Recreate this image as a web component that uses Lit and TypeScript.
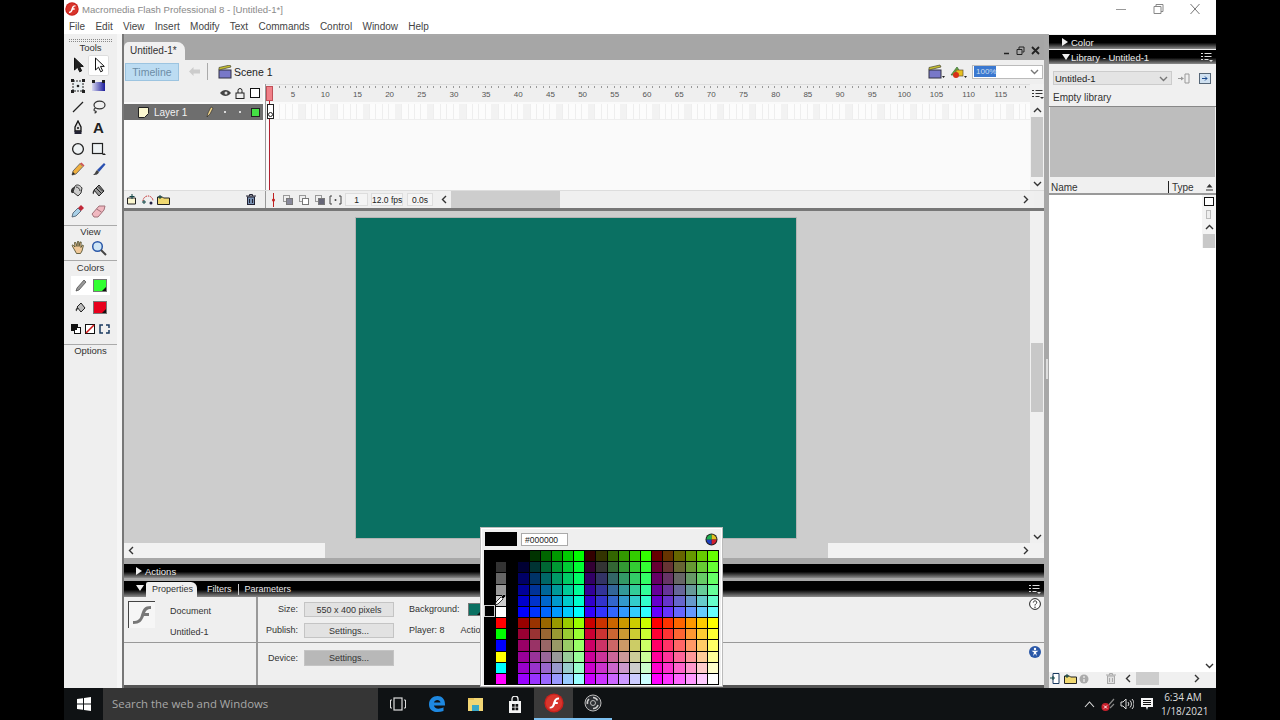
import { LitElement, html, css, svg } from 'lit';
import { customElement } from 'lit/decorators.js';

const ic = (w: number, h: number, body: unknown) =>
  html`<svg width=${w} height=${h} viewBox="0 0 ${w} ${h}">${body}</svg>`;

// flash logo, also used in the taskbar
const flashLogo = (s: number) => html`<svg width=${s} height=${s} viewBox="0 0 20 20">
  <circle cx="10" cy="10" r="9.6" fill="#c8201c" />
  <circle cx="10" cy="10" r="8.2" fill="#d8352c" />
  <path d="M15 4.6c-3.4 0-4.6 1.600-5.500 4.200l-1 3c-.5 1.400-1 2-2.800 2v1.800c3.200 0 4.400-1.400 5.200-3.800l.3-.9h2.600v-1.800h-2l.4-1.200c.4-1 1-1.500 2.800-1.500z" fill="#fff" />
</svg>`;

const arrow = (fill: string) =>
  ic(14, 16, svg`<path d="M3.500 1v12l3-2.800 2.200 4.600 2-1-2.200-4.400h3.800z" fill=${fill} stroke="#111" stroke-width="1" />`);

const chev = (rot: number, c = '#333') => html`<svg width="9" height="7" viewBox="0 0 9 7" style="transform:rotate(${rot}deg)">
  <path d="M1 5l3.500-3.500L8 5" fill="none" stroke=${c} stroke-width="1.400" />
</svg>`;
const optionsIcon = (c: string) => ic(12, 10, svg`
  <path d="M0 1.500h2M0 4.500h2M0 7.500h2M3.500 1.500h7M3.500 4.500h7M3.500 7.500h4" stroke=${c} fill="none" />
  <path d="M8 8h4l-2 2z" fill=${c} />`);

const tools = [
  arrow('#222'),
  arrow('#fff'),
  ic(14, 14, svg`<rect x="2" y="2" width="10" height="10" fill="#e8eef0" stroke="#222" stroke-dasharray="2 1" /><path d="M0 0h3v3H0zM11 0h3v3h-3zM0 11h3v3H0zM11 11h3v3h-3z" fill="#222" /><circle cx="7" cy="7" r="1.300" fill="#222" />`),
  ic(15, 14, svg`<defs><linearGradient id="gt" x1="0" x2="1"><stop offset="0" stop-color="#d8d8f0" /><stop offset="1" stop-color="#1a1a9a" /></linearGradient></defs><rect x="1" y="3" width="13" height="9" fill="url(#gt)" /><path d="M1 1h3v3H1zM11 1h3v3h-3z" fill="#222" />`),
  ic(14, 14, svg`<path d="M2 12L12 2" stroke="#222" stroke-width="1.300" />`),
  ic(15, 14, svg`<ellipse cx="8.500" cy="5" rx="5.500" ry="3.800" fill="none" stroke="#333" stroke-width="1.200" /><path d="M4.500 8c-2 1-2 3 0 3 1 0 1 2-1 2" fill="none" stroke="#333" stroke-width="1.200" />`),
  ic(12, 15, svg`<path d="M6 1l3 6v4H3V7z" fill="#ddd" stroke="#111" stroke-width="1.300" /><path d="M2.500 11h7v3h-7z" fill="#223" /><circle cx="6" cy="8" r="1" fill="#111" />`),
  html`<b class="tool-a">A</b>`,
  ic(14, 14, svg`<circle cx="7" cy="7" r="5.400" fill="#eef2f4" stroke="#222" stroke-width="1.300" />`),
  ic(15, 14, svg`<rect x="1.500" y="1.500" width="10" height="10" fill="#eef2f4" stroke="#222" stroke-width="1.200" /><path d="M11 13h4l-2-2z" fill="#222" />`),
  ic(14, 14, svg`<path d="M1 13l1-4 7-7.500 3 3L5 12z" fill="#f0b040" stroke="#555" stroke-width=".8" /><path d="M9 1.500l1.500-1 3 3-1 1z" fill="#d05050" /><path d="M1 13l1-3 2 2z" fill="#222" />`),
  ic(14, 14, svg`<path d="M5 8l7-7 1.500 1.500L7 10z" fill="#2a50b0" /><path d="M5 8l2 2c-1 3-4 3-6 3 2-1 2-3 4-5z" fill="#444" />`),
  ic(15, 15, svg`<path d="M5 3c2-2 5-1 7 2l-1 5-3 3-5-4z" fill="#ccc" stroke="#333" /><path d="M6 4c2 0 4 2 4 4" fill="none" stroke="#333" /><path d="M4 4C1 5 0 9 2 10s1-3 2-4z" fill="#333" />`),
  ic(15, 15, svg`<path d="M3 7l5-5 5 6-5 5z" fill="#999" stroke="#222" /><path d="M5 5l5 5M7 3.500l5 5" stroke="#222" /><path d="M4 6c-2 1-3 4-2 5s1-3 2-3z" fill="#333" />`),
  ic(14, 14, svg`<path d="M1 13l1-4 5-5 3 3-5 5z" fill="#a8d0e8" stroke="#456" stroke-width=".8" /><path d="M7 4l3 3 1.500-1.500L13 4l-3-3-1.500 1.500z" fill="#c02838" />`),
  ic(15, 14, svg`<path d="M1 10l7-8h6l-1 4-6 7H3z" fill="#f0b8c0" stroke="#a07078" /><path d="M5.500 5l5 3" stroke="#a07078" />`),
];

const handIcon = ic(16, 16, svg`<path d="M4 9L2 5.500l1-.7L5 7 4.500 2.500h1.200L7 6.500 7.500 1.500h1.200l.3 5 1-4.500h1.200l-.3 5.500 1.500-2.500 1 .5-1.400 5.500-1.500 2.500H6.500z" fill="#f0c898" stroke="#442" stroke-width=".8" />`);
const zoomIcon = ic(16, 16, svg`<circle cx="6.500" cy="6.500" r="4.800" fill="#cfe6f6" stroke="#2a58a8" stroke-width="1.500" /><path d="M10 10l5 5" stroke="#444" stroke-width="2" />`);

const BASE = [0, 0x33, 0x66, 0x99, 0xcc, 0xff];
const SIDE = ['#000', '#333', '#666', '#999', '#ccc', '#fff', '#f00', '#0f0', '#00f', '#ff0', '#0ff', '#f0f'];

function swatches(): string[] {
  const out: string[] = [];
  for (let row = 0; row < 12; row++) {
    out.push('#000', SIDE[row], '#000');
    const b = BASE[row % 6];
    for (let col = 0; col < 18; col++) {
      const r = BASE[Math.floor(col / 6) + (row < 6 ? 0 : 3)];
      const g = BASE[col % 6];
      out.push(`rgb(${r},${g},${b})`);
    }
  }
  return out;
}

const rulerLabels = Array.from({ length: 23 }, (_, i) => (i + 1) * 5);

@customElement('app-root')
export class AppRoot extends LitElement {
  static styles = css`
    :host {
      display: flex;
      justify-content: center;
      width: 1280px;
      height: 720px;
      background: #000;
      font-family: 'Liberation Sans', sans-serif;
      font-size: 10px;
      color: #222;
      overflow: hidden;
    }
    svg { display: block; flex: none; }
    .screen {
      position: relative;
      width: 1152px;
      height: 720px;
      display: flex;
      flex-direction: column;
      background: #fff;
    }
    .titlebar {
      height: 18px;
      display: flex;
      align-items: center;
      padding-left: 1px;
      font-size: 9.600px;
      color: #8a8a8a;
      gap: 3px;
    }
    .win-btns { margin-left: auto; display: flex; gap: 23px; padding-right: 14px; }
    .menubar {
      height: 16px;
      display: flex;
      align-items: center;
      padding-left: 5px;
      gap: 10.300px;
      font-size: 10px;
      color: #444;
    }
    .work { height: 654px; display: flex; background: #f6f6f6; }

    .tools {
      width: 53px;
      margin-right: 5px;
      background: #efefef;
      padding-top: 5px;
      display: flex;
      flex-direction: column;
      align-items: stretch;
      text-align: center;
      color: #333;
      font-size: 9.500px;
    }
    .grip { height: 3px; margin: 0 5px; border-top: 1px dotted #888; border-bottom: 1px dotted #888; box-sizing: border-box; flex: none; }
    .tools-label { height: 12px; line-height: 12px; flex: none; }
    .tools-label.first { height: 13px; }
    .tool-grid { display: grid; grid-template-columns: 21px 21px; grid-auto-rows: 20.800px; padding-left: 3px; }
    .tool { display: flex; align-items: center; justify-content: center; }
    .tool.on { background: #fff; border-radius: 2px; box-shadow: inset 0 0 0 1px #ddd; }
    .tool-a { font: bold 15px 'Liberation Sans', sans-serif; color: #222; }
    .sep { height: 1px; background: #aaa; flex: none; }
    .color-row { height: 19px; display: flex; align-items: center; justify-content: center; gap: 6px; margin: 0 7px 0 7px; flex: none; }
    .color-row.on { background: #fff; }
    .swatch { position: relative; width: 14px; height: 13px; border: 1px solid #777; box-sizing: border-box; }
    .swatch::after { content: ''; position: absolute; right: 0; bottom: 0; border: 2.500px solid transparent; border-right-color: #111; border-bottom-color: #111; }
    .tool-row3 { display: flex; justify-content: center; gap: 4px; height: 18px; align-items: center; flex: none; }

    .center { width: 922px; display: flex; flex-direction: column; background: #a8a8a8; border-left: 2px solid #777; box-sizing: border-box; padding-top: 2px; }
    .tabstrip { height: 24px; flex: none; display: flex; align-items: flex-end; background: #a6a6a6; border-top-left-radius: 6px; }
    .doc-tab { height: 18px; line-height: 18px; width: 55px; padding-left: 6px; background: #f0f0f0; border-radius: 5px 8px 0 0; font-size: 10px; color: #333; }
    .doc-btns { margin-left: auto; margin-right: 4px; margin-bottom: 5px; display: flex; gap: 6px; align-items: center; }
    .toolbar { height: 24px; flex: none; background: #efefef; display: flex; align-items: center; padding-left: 1px; padding-bottom: 1px; box-sizing: border-box; }
    .tl-btn { width: 52px; height: 16px; line-height: 16px; text-align: center; background: #bcdcf2; border: 1px solid #9cc4e0; color: #6c8ca6; font-size: 10.500px; }
    .back { margin: 0 7px 0 10px; }
    .tb-sep { width: 1px; height: 17px; background: #aaa; margin-right: 10px; }
    .scene { margin-left: 2px; font-size: 10.500px; color: #222; }
    .tb-right { margin-left: auto; display: flex; align-items: center; gap: 5px; padding-right: 1px; }
    .zoom-box { width: 71px; height: 14px; background: #fff; border: 1px solid #bbb; display: flex; align-items: center; padding: 0 3px 0 1px; justify-content: space-between; box-sizing: border-box; margin-left: -1px; }
    .zoom-box span { background: #3a78d0; color: #cde; font-size: 8px; line-height: 11px; padding: 0 2px; width: 18px; }

    .timeline { height: 124px; flex: none; display: flex; flex-direction: column; background: #fafafa; }
    .tl-top { height: 106px; flex: none; display: flex; }
    .layers { width: 139px; flex: none; margin-right: 2px; }
    .layer-head { height: 18px; background: #efefef; display: flex; align-items: center; padding-left: 3px; }
    .layer-head .icons { margin-left: auto; margin-right: 3px; display: flex; gap: 3px; align-items: center; }
    .layer-head .icons svg:last-child { margin-left: 2px; }
    .layer-row { height: 16px; margin-top: 2px; background: #6e6e6e; display: flex; align-items: center; color: #f2f2f2; padding-left: 14px; font-size: 10px; }
    .layer-row .name { margin-left: 5px; }
    .layer-row .marks { margin-left: auto; display: flex; align-items: center; gap: 10px; padding-right: 3.500px; }
    .dot { width: 2px; height: 2px; background: #fff; border-radius: 50%; }
    .dot + .dot { margin-left: 3px; }
    .frames { position: relative; flex: 1; border-left: 1px solid #999; overflow: hidden; }
    .ruler { height: 18px; background: #efefef; display: flex; padding-left: 11px; font-size: 8px; line-height: 19px; color: #555; box-sizing: border-box; border-top: 1px solid #ddd;
      background-image: repeating-linear-gradient(90deg, #999 0 1px, transparent 1px 6.436px); background-size: 100% 2px; background-repeat: no-repeat; background-position: 0 1px; }
    .ruler span { width: 32.180px; flex: none; text-align: center; }
    .frame-row { height: 16px; margin-top: 2px; background-color: #fcfcfc; background-image: repeating-linear-gradient(90deg, #f2f2f2 0 6.436px, transparent 6.436px 32.180px), repeating-linear-gradient(90deg, #eee 0 1px, transparent 1px 6.436px); border-bottom: 1px solid #eee; box-sizing: border-box; }
    .playhead { position: absolute; left: 0; top: 2px; bottom: 0; width: 7px; display: flex; flex-direction: column; align-items: center; }
    .playhead .head { width: 7px; height: 15px; background: #f08088; border: 1px solid #c05058; box-sizing: border-box; flex: none; }
    .playhead .line { width: 1px; flex: 1; background: #b02030; }
    .key { position: absolute; left: 1px; top: 20px; width: 7px; height: 15px; border: 1px solid #222; background: #fff; box-sizing: border-box; }
    .key::after { content: ''; position: absolute; left: 0; bottom: 1px; width: 3px; height: 3px; border: 1px solid #222; border-radius: 50%; }
    .vscroll { width: 14px; flex: none; display: flex; flex-direction: column; align-items: center; background: #f2f2f2; }
    .vscroll .thumb { width: 12px; background: #c8c8c8; }
    .vscroll .fill { flex: 1; }
    .vscroll .arr { height: 13px; display: flex; align-items: center; flex: none; }

    .tl-bottom { height: 18px; display: flex; align-items: center; background: #efefef; border-top: 1px solid #ddd; box-sizing: border-box; }
    .tl-left { width: 139px; flex: none; display: flex; align-items: center; padding: 0 7px 0 3px; box-sizing: border-box; gap: 3px; margin-right: 2px; }
    .tl-left .trash { margin-left: auto; }
    .tl-mid { display: flex; align-items: center; flex: 1; border-left: 1px solid #999; height: 100%; padding-left: 5px; }
    .onion { display: flex; gap: 3px; margin-left: 5px; }
    .cell { height: 13px; line-height: 12px; text-align: center; font-size: 8.500px; background: #f4f4f4; border: 1px solid #ddd; box-sizing: border-box; white-space: nowrap; flex: none; }
    .hbar { flex: 1; height: 100%; display: flex; align-items: center; background: #f0f0f0; padding: 0 4px 0 0; }
    .hbar .thumb { height: 100%; background: #cdcdcd; }
    .hbar .end { margin-left: auto; }

    .tl-gap { height: 3px; flex: none; background: #777; }
    .stage-area { height: 347px; flex: none; display: flex; flex-direction: column; }
    .stage-main { flex: 1; display: flex; min-height: 0; }
    .canvas { flex: 1; background: #cdcdcd; padding: 7px 0 0 232px; box-sizing: border-box; }
    .stage { width: 440px; height: 320px; background: #0a7062; box-shadow: 0 0 0 1px rgba(0,0,0,.12); }
    .stage-h { height: 15px; flex: none; display: flex; align-items: center; background: #f2f2f2; padding: 0 14px 0 3px; }
    .stage-h .thumb { height: 100%; background: #cdcdcd; width: 503px; margin-left: 189px; }
    .stage-h .end { margin-left: auto; }

    .panel-gap { height: 6px; flex: none; }
    .bar { height: 14px; flex: none; background: linear-gradient(#000 0 55%, #8c8c8c); color: #eee; display: flex; align-items: center; font-size: 9.500px; padding-left: 12px; gap: 3px; }
    .tri-r { width: 0; height: 0; border: 4px solid transparent; border-left: 6px solid #eee; border-right: 0; }
    .tri-d { width: 0; height: 0; border: 4px solid transparent; border-top: 6px solid #eee; border-bottom: 0; }
    .props-tabs { height: 16px; margin-top: 3px; background: linear-gradient(#000 0 55%, #8c8c8c); padding-left: 12px; align-items: flex-end; gap: 0; }
    .props-tabs .tri-d { margin-bottom: 6px; margin-right: 2px; }
    .ptab { height: 15px; line-height: 15px; padding: 0 4px 0 6px; background: #efefef; color: #333; border-radius: 2px 6px 0 0; font-size: 9px; }
    .ptab2 { height: 15px; line-height: 15px; color: #eee; font-size: 9px; padding: 0 6px 0 10px; }
    .ptab2 + .ptab2 { border-left: 1px solid #ccc; padding-left: 6px; height: 11px; line-height: 11px; margin-bottom: 2px; }
    .bar .opts { margin-left: auto; margin-right: 3px; align-self: center; }

    .props { flex: 1; background: #efefef; display: grid; grid-template-columns: 134px 1fr; grid-template-rows: 46px 1fr; font-size: 9px; color: #333; border-bottom: 3px solid #555; }
    .doc-info { display: flex; border-right: 2px solid #999; border-bottom: 1px solid #999; padding: 4px 0 0 4px; gap: 15px; }
    .doc-icon { width: 27px; height: 27px; flex: none; border-left: 1px solid #444; border-top: 1px solid #444; background: #f6f6f6; box-sizing: border-box; display: flex; align-items: center; justify-content: center; }
    .doc-names { display: flex; flex-direction: column; gap: 11px; padding-top: 5px; }
    .doc-empty { border-right: 2px solid #999; }
    .prop-grid { display: grid; grid-template-columns: 40px 90px auto; grid-auto-rows: 21px; column-gap: 6px; align-items: center; border-bottom: 1px solid #999; align-content: center; }
    .prop-grid > .lbl, .dev > .lbl { text-align: right; }
    .pbtn { height: 15px; line-height: 14px; text-align: center; background: #e2e2e2; border: 1px solid #c4c4c4; box-sizing: border-box; }
    .pbtn.dark { background: #b8b8b8; height: 16px; }
    .prop-extra { display: flex; align-items: center; gap: 4px; padding-left: 9px; }
    .prop-extra .swatch { background: #0a7062; margin-left: 4px; }
    .prop-extra .action { margin-left: 12px; }
    .dev { display: grid; grid-template-columns: 40px 90px; column-gap: 6px; align-items: center; padding-top: 7px; }
    .round-icon { position: absolute; left: 965px; }

    .splitter { width: 5px; flex: none; background: #a8a8a8; display: flex; align-items: center; }
    .splitter i { display: block; width: 2px; height: 20px; background: #ddd; margin-left: 2px; margin-top: 16px; }
    .side { flex: 1; display: flex; flex-direction: column; background: #f0f0f0; padding: 1px 0 3px; }
    .side .bar { padding-left: 13px; gap: 3px; }
    .side .bar + .bar { margin-top: 1px; }
    .side .tri-d { margin-right: -2px; }
    .lib-tools { height: 24px; flex: none; display: flex; align-items: center; padding: 4px 4px 0; box-sizing: border-box; gap: 6px; }
    .lib-tools svg:last-child { margin-left: 3px; }
    .lib-select { width: 119px; height: 14px; background: #e4e4e4; border: 1px solid #ccc; display: flex; align-items: center; justify-content: space-between; padding: 0 3px 0 1px; font-size: 9.500px; box-sizing: border-box; }
    .empty-lab { height: 19px; line-height: 19px; padding-left: 4px; font-size: 10px; border-bottom: 1px solid #888; box-sizing: border-box; flex: none; color: #333; }
    .preview { height: 70px; flex: none; background: #bdbdbd; margin: 0 1px; }
    .lib-head { margin-top: 4px; height: 14px; flex: none; display: flex; background: #f0f0f0; border-bottom: 2px solid #999; box-sizing: border-box; font-size: 10px; line-height: 13px; color: #333; }
    .lib-head .name { width: 120px; padding-left: 2px; box-sizing: border-box; border-right: 1px solid #222; }
    .lib-head .type { flex: 1; padding-left: 3px; }
    .lib-head .sort { width: 13px; display: flex; align-items: center; justify-content: center; }
    .lib-list { flex: 1; background: #fff; display: flex; justify-content: flex-end; min-height: 0; }
    .lib-scroll { width: 14px; display: flex; flex-direction: column; align-items: center; background: #f4f4f4; }
    .lib-scroll .mini { height: 13px; display: flex; align-items: center; justify-content: center; flex: none; }
    .lib-scroll .thumb { width: 12px; height: 14px; background: #c8c8c8; flex: none; }
    .lib-scroll .fill { flex: 1; background: #fff; width: 100%; }
    .lib-foot { height: 13px; flex: none; display: flex; align-items: center; background: #f0f0f0; padding: 0 15px 0 1px; gap: 2px; }
    .lib-foot .left { margin-left: 6px; }
    .lib-foot .thumb { height: 100%; width: 23px; background: #cdcdcd; margin-left: 1px; }
    .lib-foot .end { margin-left: auto; }

    .taskbar { height: 32px; flex: none; background: #0f1214; display: flex; align-items: center; color: #ddd; }
    .start { width: 39px; display: flex; justify-content: center; flex: none; }
    .search { width: 275px; height: 100%; background: #353535; color: #a8a8a8; font-size: 11.400px; line-height: 32px; padding-left: 9px; box-sizing: border-box; font-family: 'Open Sans', 'Noto Sans', sans-serif; }
    .task-apps { display: flex; height: 100%; }
    .app { width: 39px; height: 100%; display: flex; align-items: center; justify-content: center; box-sizing: border-box; }
    .app.active { background: #3a3a3a; border-bottom: 2px solid #7cc0f0; }
    .app.running { border-bottom: 2px solid #7cc0f0; }
    .tray { margin-left: auto; display: flex; align-items: center; gap: 5.500px; height: 100%; padding-right: 11px; }
    .clock { font-size: 10px; text-align: center; line-height: 14px; width: 44px; font-family: 'Open Sans', 'Noto Sans', sans-serif; margin-left: 2px; }

    .popup { position: absolute; left: 417px; top: 528px; width: 241px; height: 158px; background: #efefef; border: 1px solid #fff; box-sizing: border-box; box-shadow: 0 0 0 1px #bbb; padding: 2px 2px 0; display: flex; flex-direction: column; }
    .pop-head { height: 16px; display: flex; align-items: center; flex: none; padding-left: 1px; }
    .pop-color { width: 32px; height: 14px; background: #000; margin-right: 4px; }
    .pop-hex { height: 13px; background: #fff; border: 1px solid #aaa; font-size: 8.500px; line-height: 12px; padding-left: 3px; box-sizing: border-box; width: 47px; }
    .pop-wheel { margin-left: auto; margin-right: 1px; }
    .pal { position: relative; flex: 1; display: grid; grid-template-columns: repeat(21, 1fr); grid-template-rows: repeat(12, 1fr); gap: 1px; background: #000; padding: 1px; margin-top: 3px; }
    .pal .sel { position: absolute; left: 0; top: 55px; width: 11px; height: 12px; border: 1px solid #ccc; box-sizing: border-box; background: #000; }
    .dropper { position: absolute; left: 10px; top: 43px; }
  `;

  render() {
    return html`
      <div class="screen">
        <div class="titlebar">
          <span>${flashLogo(14)}</span>
          <span>Macromedia Flash Professional 8 - [Untitled-1*]</span>
          <div class="win-btns">
            ${ic(14, 10, svg`<path d="M2 5.500h10" stroke="#999" />`)}
            ${ic(14, 10, svg`<path d="M3 2.500h7v7H3zM5 2.500V.500h7v7h-2" fill="none" stroke="#888" />`)}
            ${ic(14, 10, svg`<path d="M2.500 0l9 10M11.500 0l-9 10" stroke="#777" fill="none" />`)}
          </div>
        </div>
        <div class="menubar">
          ${['File', 'Edit', 'View', 'Insert', 'Modify', 'Text', 'Commands', 'Control', 'Window', 'Help'].map((m) => html`<span>${m}</span>`)}
        </div>
        <div class="work">
          ${this.renderTools()}
          <div class="center">
            ${this.renderDocHead()}
            ${this.renderTimeline()}
            <div class="tl-gap"></div>
            <div class="stage-area">
              <div class="stage-main">
                <div class="canvas"><div class="stage"></div></div>
                <div class="vscroll" style="background:#f0f0f0">
                  <div class="fill" style="flex:0 0 132px"></div>
                  <div class="thumb" style="height:69px"></div>
                  <div class="fill"></div>
                  <div class="arr">${chev(180)}</div>
                </div>
              </div>
              <div class="stage-h">
                ${chev(-90)}<div class="thumb"></div><span class="end">${chev(90)}</span>
              </div>
            </div>
            <div class="panel-gap"></div>
            <div class="bar"><i class="tri-r"></i><span>Actions</span></div>
            <div class="bar props-tabs">
              <i class="tri-d"></i>
              <span class="ptab">Properties</span>
              <span class="ptab2">Filters</span>
              <span class="ptab2">Parameters</span>
              <span class="opts">${optionsIcon('#ddd')}</span>
            </div>
            ${this.renderProps()}
          </div>
          <div class="splitter"><i></i></div>
          ${this.renderLibrary()}
        </div>
        ${this.renderTaskbar()}
        ${this.renderPopup()}
      </div>
    `;
  }

  renderTools() {
    return html`<div class="tools">
      <div class="grip"></div>
      <div class="tools-label first">Tools</div>
      <div class="tool-grid">
        ${tools.map((t, i) => html`<div class="tool ${i === 1 ? 'on' : ''}">${t}</div>`)}
      </div>
      <div class="sep" style="margin-top:3.600px"></div>
      <div class="tools-label">View</div>
      <div class="tool-grid" style="grid-auto-rows:20px">
        <div class="tool">${handIcon}</div><div class="tool">${zoomIcon}</div>
      </div>
      <div class="sep" style="margin-top:2px"></div>
      <div class="tools-label" style="margin-top:1px">Colors</div>
      <div class="color-row on" style="margin-top:2px">
        ${ic(12, 13, svg`<path d="M1 12l1-3 7-8 2 2-7 8z" fill="#999" stroke="#444" stroke-width=".7" />`)}
        <div class="swatch" style="background:#33ff33"></div>
      </div>
      <div class="color-row" style="margin-top:3.500px">
        ${ic(12, 13, svg`<path d="M2 6l4-4 4 5-4 4z" fill="#bbb" stroke="#222" /><path d="M3 6c-2 1-3 3-2 4s1-2 2-2z" fill="#333" />`)}
        <div class="swatch" style="background:#e8001c"></div>
      </div>
      <div class="tool-row3" style="margin-top:2.500px">
        ${ic(10, 10, svg`<rect x=".5" y=".5" width="6" height="6" fill="#111" stroke="#111" /><rect x="3.500" y="3.500" width="6" height="6" fill="#fff" stroke="#111" /><rect x="1" y="1" width="5" height="5" fill="#111" />`)}
        ${ic(10, 10, svg`<rect x=".5" y=".5" width="9" height="9" fill="#fff" stroke="#111" /><path d="M1 9l8-8" stroke="#d01818" stroke-width="1.600" />`)}
        ${ic(11, 10, svg`<path d="M4 1H1v8h3M7 1h3v3M7 9h3V6" fill="none" stroke="#1a3a60" stroke-width="1.500" />`)}
      </div>
      <div class="sep" style="margin-top:6.500px"></div>
      <div class="tools-label">Options</div>
    </div>`;
  }

  renderDocHead() {
    return html`
      <div class="tabstrip">
        <div class="doc-tab">Untitled-1*</div>
        <div class="doc-btns">
          ${ic(7, 8, svg`<path d="M1 6.500h5" stroke="#222" stroke-width="1.500" />`)}
          ${ic(9, 9, svg`<path d="M1 3.500h5v5H1zM3 3V1h5v5H6.500" fill="none" stroke="#222" />`)}
          ${ic(9, 9, svg`<path d="M1 1l7 7M8 1L1 8" stroke="#222" stroke-width="1.800" />`)}
        </div>
      </div>
      <div class="toolbar">
        <div class="tl-btn">Timeline</div>
        <span class="back">${ic(11, 9, svg`<path d="M0 4.500L4.500 0v2.500H11v4H4.500V9z" fill="#ccc" />`)}</span>
        <div class="tb-sep"></div>
        ${ic(14, 14, svg`<rect x="1" y="5" width="12" height="8" fill="#7878c8" stroke="#334" /><path d="M1 5L1 2.500 12 0l1 2z" fill="#c8c030" stroke="#443" stroke-width=".7" />`)}
        <span class="scene">Scene 1</span>
        <div class="tb-right">
          ${ic(17, 15, svg`<rect x="1" y="6" width="12" height="8" fill="#7878c8" stroke="#334" /><path d="M1 6V3.500L12 1l1 2z" fill="#c8c030" stroke="#443" stroke-width=".7" /><path d="M14 12h3l-1.500 2z" fill="#222" />`)}
          ${ic(18, 15, svg`<path d="M1 11l6-8 2 3v5z" fill="#6ab040" stroke="#363" stroke-width=".7" /><rect x="6" y="6" width="7" height="6" fill="#e8c020" stroke="#653" stroke-width=".7" /><circle cx="6" cy="11" r="3" fill="#d83018" /><path d="M14 12h3l-1.500 2z" fill="#222" />`)}
          <div class="zoom-box"><span>100%</span>${chev(180, '#777')}</div>
        </div>
      </div>`;
  }

  renderTimeline() {
    return html`<div class="timeline">
      <div class="tl-top">
        <div class="layers">
          <div class="layer-head">
            <div class="icons">
              ${ic(12, 9, svg`<path d="M0 4c3-4 8-4 11 0-3 4-8 4-11 0z" fill="#444" /><circle cx="6" cy="4" r="1.500" fill="#ddd" />`)}
              ${ic(10, 11, svg`<rect x="1" y="5" width="8" height="5.500" fill="#eee" stroke="#222" /><path d="M3 5V2.500a2 2 0 0 1 4 0V5" fill="none" stroke="#222" />`)}
              ${ic(10, 10, svg`<rect x=".5" y=".5" width="9" height="9" fill="#fff" stroke="#111" />`)}
            </div>
          </div>
          <div class="layer-row">
            ${ic(11, 11, svg`<path d="M.5.500h10v6l-4 4h-6z" fill="#fbf7d0" stroke="#222" />`)}
            <span class="name">Layer 1</span>
            <div class="marks">
              ${ic(8, 12, svg`<path d="M1 11l1-4 3-6 2 1-3 6z" fill="#f4d890" stroke="#222" stroke-width=".6" />`)}
              <i class="dot"></i><i class="dot"></i>
              ${ic(9, 9, svg`<rect x=".5" y=".5" width="8" height="8" fill="#44e044" stroke="#222" />`)}
            </div>
          </div>
        </div>
        <div class="frames">
          <div class="ruler">${rulerLabels.map((n) => html`<span>${n}</span>`)}</div>
          <div class="frame-row"></div>
          <div class="playhead"><div class="head"></div><div class="line"></div></div>
          <div class="key"></div>
        </div>
        <div class="vscroll">
          <div class="arr" style="height:20px;padding-left:1px">${optionsIcon('#333')}</div>
          <div class="arr">${chev(0)}</div>
          <div class="thumb" style="height:60px"></div>
          <div class="fill"></div>
          <div class="arr">${chev(180)}</div>
        </div>
      </div>
      <div class="tl-bottom">
        <div class="tl-left">
          ${ic(12, 11, svg`<path d="M.5 4h8v6h-8z" fill="#fbf7d0" stroke="#222" /><path d="M5 0v5M2.500 2.500h5" stroke="#144" />`)}
          ${ic(12, 11, svg`<path d="M1 7a5 5 0 0 1 10 0" fill="none" stroke="#c02020" stroke-dasharray="1.500 1" /><circle cx="9" cy="9" r="1.500" fill="#224" /><path d="M2 6v4M0 8h4" stroke="#144" />`)}
          ${ic(13, 11, svg`<path d="M.5 3h5l1 1h6v6.500H.5z" fill="#f0d870" stroke="#222" /><path d="M3 1v4M1 3h4" stroke="#144" />`)}
          <span class="trash">${ic(10, 11, svg`<rect x="1.500" y="3" width="7" height="7.500" fill="#7890b0" stroke="#223" /><path d="M0 2h10M3.500 2V.5h3V2M3.500 5v4M6.500 5v4" stroke="#223" fill="none" />`)}</span>
        </div>
        <div class="tl-mid">
          ${ic(5, 14, svg`<path d="M2.500 0v14" stroke="#c02020" /><circle cx="2.500" cy="7" r="1.500" fill="#c02020" />`)}
          <div class="onion">
            ${['#889', '#fff', '#667', '#fff'].map((c, i) => ic(13, 12, i < 3
              ? svg`<rect x="2.500" y="1.500" width="6" height="6" fill="none" stroke="#999" /><rect x="5.500" y="4.500" width="6" height="6" fill=${c} stroke="#777" />`
              : svg`<path d="M3 2H1v8h2M10 2h2v8h-2" fill="none" stroke="#444" /><circle cx="6.500" cy="6" r="1" fill="#444" />`))}
          </div>
          <div class="cell" style="width:23px;margin-left:3px">1</div>
          <div class="cell" style="width:32px;margin-left:3px">12.0 fps</div>
          <div class="cell" style="width:26px;margin-left:4px">0.0s</div>
          <div class="hbar" style="margin-left:7px">
            ${chev(-90)}<div class="thumb" style="width:109px;margin-left:2px"></div><span class="end">${chev(90)}</span>
          </div>
          <div style="width:10px"></div>
        </div>
      </div>
    </div>`;
  }

  renderProps() {
    return html`<div class="props">
      <div class="doc-info">
        <div class="doc-icon">${ic(22, 22, svg`<path d="M20 2c-7 0-8 3-10 9-1 4-3 6-8 6v3c7 0 9-3 11-8h5V9h-4c1-2 2-4 6-4z" fill="#777" />`)}</div>
        <div class="doc-names"><span>Document</span><span>Untitled-1</span></div>
      </div>
      <div class="prop-grid">
        <span class="lbl">Size:</span><div class="pbtn">550 x 400 pixels</div>
        <div class="prop-extra"><span>Background:</span><div class="swatch"></div></div>
        <span class="lbl">Publish:</span><div class="pbtn">Settings...</div>
        <div class="prop-extra"><span>Player: 8</span><span class="action">ActionScript</span></div>
      </div>
      <div class="doc-empty"></div>
      <div>
        <div class="dev"><span class="lbl">Device:</span><div class="pbtn dark">Settings...</div></div>
      </div>
    </div>
    <div class="round-icon" style="top:598px">
      ${ic(12, 12, svg`<circle cx="6" cy="6" r="5.400" fill="#fff" stroke="#222" /><path d="M4.300 4.500c.3-2.300 3.600-2 3.400 0 0 1.500-1.700 1.300-1.700 3" fill="none" stroke="#222" /><circle cx="6" cy="9.300" r=".7" fill="#222" />`)}
    </div>
    <div class="round-icon" style="top:646px">
      ${ic(12, 12, svg`<circle cx="6" cy="6" r="6" fill="#2a58a8" /><circle cx="6" cy="3" r="1.200" fill="#fff" /><path d="M2.500 4.800h7L7 6.500 8 10 6 7.800 4 10l1-3.500z" fill="#fff" />`)}
    </div>`;
  }

  renderLibrary() {
    return html`<div class="side">
      <div class="bar"><i class="tri-r"></i><span>Color</span></div>
      <div class="bar">
        <i class="tri-d"></i><span>Library - Untitled-1</span>
        <span class="opts">${optionsIcon('#ddd')}</span>
      </div>
      <div class="lib-tools">
        <div class="lib-select"><span>Untitled-1</span>${chev(180, '#777')}</div>
        ${ic(12, 11, svg`<path d="M0 5.500h5M7 1h4v9H7z" fill="none" stroke="#999" /><path d="M3 3.500l3 2-3 2z" fill="#999" />`)}
        ${ic(12, 11, svg`<rect x=".5" y=".5" width="11" height="10" fill="#cfe0f0" stroke="#567" /><path d="M3 5.500h5M6 3.500l2 2-2 2" fill="none" stroke="#1a4a90" />`)}
      </div>
      <div class="empty-lab">Empty library</div>
      <div class="preview"></div>
      <div class="lib-head">
        <div class="name">Name</div><div class="type">Type</div>
        <div class="sort">${ic(7, 8, svg`<path d="M.5 4.500L3.500 1l3 3.500z" fill="#333" /><path d="M0 7h7" stroke="#333" />`)}</div>
      </div>
      <div class="lib-list">
        <div class="lib-scroll">
          <div class="mini">${ic(10, 9, svg`<rect x=".5" y=".5" width="9" height="8" fill="#fff" stroke="#111" />`)}</div>
          <div class="mini">${ic(6, 9, svg`<rect x=".5" y=".5" width="4" height="8" fill="#eee" stroke="#bbb" />`)}</div>
          <div class="mini">${chev(0)}</div>
          <div class="thumb"></div>
          <div class="fill"></div>
          <div class="mini" style="background:#fff;width:100%">${chev(180)}</div>
        </div>
      </div>
      <div class="lib-foot">
        ${ic(12, 11, svg`<path d="M3 .5h6v10H3z" fill="#fff" stroke="#1a3a60" /><path d="M0 5h5M3 3v4" stroke="#144" />`)}
        ${ic(13, 11, svg`<path d="M.5 3h5l1 1h6v6.500H.5z" fill="#f0d870" stroke="#222" /><path d="M3 1v4M1 3h4" stroke="#144" />`)}
        ${ic(10, 10, svg`<circle cx="5" cy="5" r="4.500" fill="#aaa" /><path d="M5 2v2M5 5v3" stroke="#fff" />`)}
        <span style="width:13px"></span>
        ${ic(10, 11, svg`<rect x="1.500" y="3" width="7" height="7.500" fill="#e0e0e0" stroke="#aaa" /><path d="M0 2h10M3.500 2V.5h3V2M3.500 5v4M6.500 5v4" stroke="#aaa" fill="none" />`)}
        <span class="left">${chev(-90)}</span>
        <div class="thumb"></div>
        <span class="end">${chev(90)}</span>
      </div>
    </div>`;
  }

  renderTaskbar() {
    return html`<div class="taskbar">
      <div class="start">${ic(14, 14, svg`<path d="M0 2l6-.8v5.300H0zM7 1l7-1v6.500H7zM0 7.500h6v5.300l-6-.8zM7 7.500h7V14l-7-1z" fill="#fff" />`)}</div>
      <div class="search">Search the web and Windows</div>
      <div class="task-apps">
        <div class="app">${ic(16, 14, svg`<rect x="4" y="1" width="8" height="12" fill="none" stroke="#ddd" stroke-width="1.200" /><path d="M2 3H.5v8H2M14 3h1.500v8H14" fill="none" stroke="#ddd" />`)}</div>
        <div class="app">${ic(18, 18, svg`<path d="M1 9.500C1 4 5 1 9.500 1 14 1 17 4 17 9.500v1H6c.2 3 4.500 4.500 9.500 1.800v3.700C9 18.500 1 17 1 9.500zM6 7.500h6.500C12.300 4 6.500 4 6 7.500z" fill="#1e88e0" />`)}</div>
        <div class="app">${ic(16, 15, svg`<path d="M0 1h15v13H0z" fill="#f2d675" /><path d="M0 1h6v2H0z" fill="#e8c45a" /><rect x="4" y="8" width="7" height="6" fill="#3aa8c8" />`)}</div>
        <div class="app">${ic(14, 17, svg`<path d="M1 5h12v12H1z" fill="#f4f4f4" /><path d="M4 5V3a3 3 0 0 1 6 0v2" fill="none" stroke="#f4f4f4" stroke-width="1.300" /><path d="M4 8h2.700v2.700H4zM7.500 8h2.700v2.700H7.500zM4 11.500h2.700v2.700H4zM7.500 11.500h2.700v2.700H7.500z" fill="#111" />`)}</div>
        <div class="app active">${flashLogo(20)}</div>
        <div class="app running">${ic(18, 18, svg`<circle cx="9" cy="9" r="8" fill="#2c2f33" stroke="#bbb" /><circle cx="9" cy="9" r="2.500" fill="none" stroke="#bbb" /><path d="M9 3.500a5 5 0 0 1 4.500 3M14 11a5 5 0 0 1-5 3.500M3.500 10A5 5 0 0 1 5 5" fill="none" stroke="#ccc" stroke-width="1.600" />`)}</div>
      </div>
      <div class="tray">
        ${ic(11, 7, svg`<path d="M1 6l4.500-5L10 6" fill="none" stroke="#ddd" stroke-width="1.100" />`)}
        ${ic(14, 13, svg`<path d="M6 9l7-8M9 10l4-4" stroke="#888" stroke-width="1.200" /><circle cx="4.500" cy="9" r="4" fill="#c8202c" /><path d="M3 7.500l3 3M6 7.500l-3 3" stroke="#fff" />`)}
        ${ic(14, 12, svg`<path d="M1 4h2l3-3v10L3 8H1z" fill="none" stroke="#ddd" /><path d="M8 4a3 3 0 0 1 0 4M10 2.500a5 5 0 0 1 0 7M12 1a7 7 0 0 1 0 10" fill="none" stroke="#ddd" />`)}
        ${ic(14, 14, svg`<path d="M1 1h12v9H8l-1 3-1-3H1z" fill="#f6f6f6" /><path d="M3 3.500h8M3 5.500h8M3 7.500h8" stroke="#111" />`)}
        <div class="clock"><div>6:34 AM</div><div>1/18/2021</div></div>
      </div>
    </div>`;
  }

  renderPopup() {
    return html`<div class="popup">
      <div class="pop-head">
        <div class="pop-color"></div>
        <div class="pop-hex">#000000</div>
        <div class="pop-wheel">${ic(13, 13, svg`<circle cx="6.500" cy="6.500" r="6" fill="#222" /><path d="M6.500 1.500a5 5 0 0 1 5 5h-5z" fill="#e0c020" /><path d="M11.500 6.500a5 5 0 0 1-5 5v-5z" fill="#d02030" /><path d="M6.500 11.500a5 5 0 0 1-5-5h5z" fill="#2040c0" /><path d="M1.500 6.500a5 5 0 0 1 5-5v5z" fill="#20b050" />`)}</div>
      </div>
      <div class="pal">
        ${swatches().map((c) => html`<i style="background:${c}"></i>`)}
        <div class="sel"></div>
        <span class="dropper">${ic(13, 13, svg`<path d="M1 12l1-3 5-5 2 2-5 5z" fill="#fff" stroke="#000" stroke-width=".8" /><path d="M7 4l2 2 3-3-2-2z" fill="#000" stroke="#fff" stroke-width=".5" />`)}</span>
      </div>
    </div>`;
  }
}
